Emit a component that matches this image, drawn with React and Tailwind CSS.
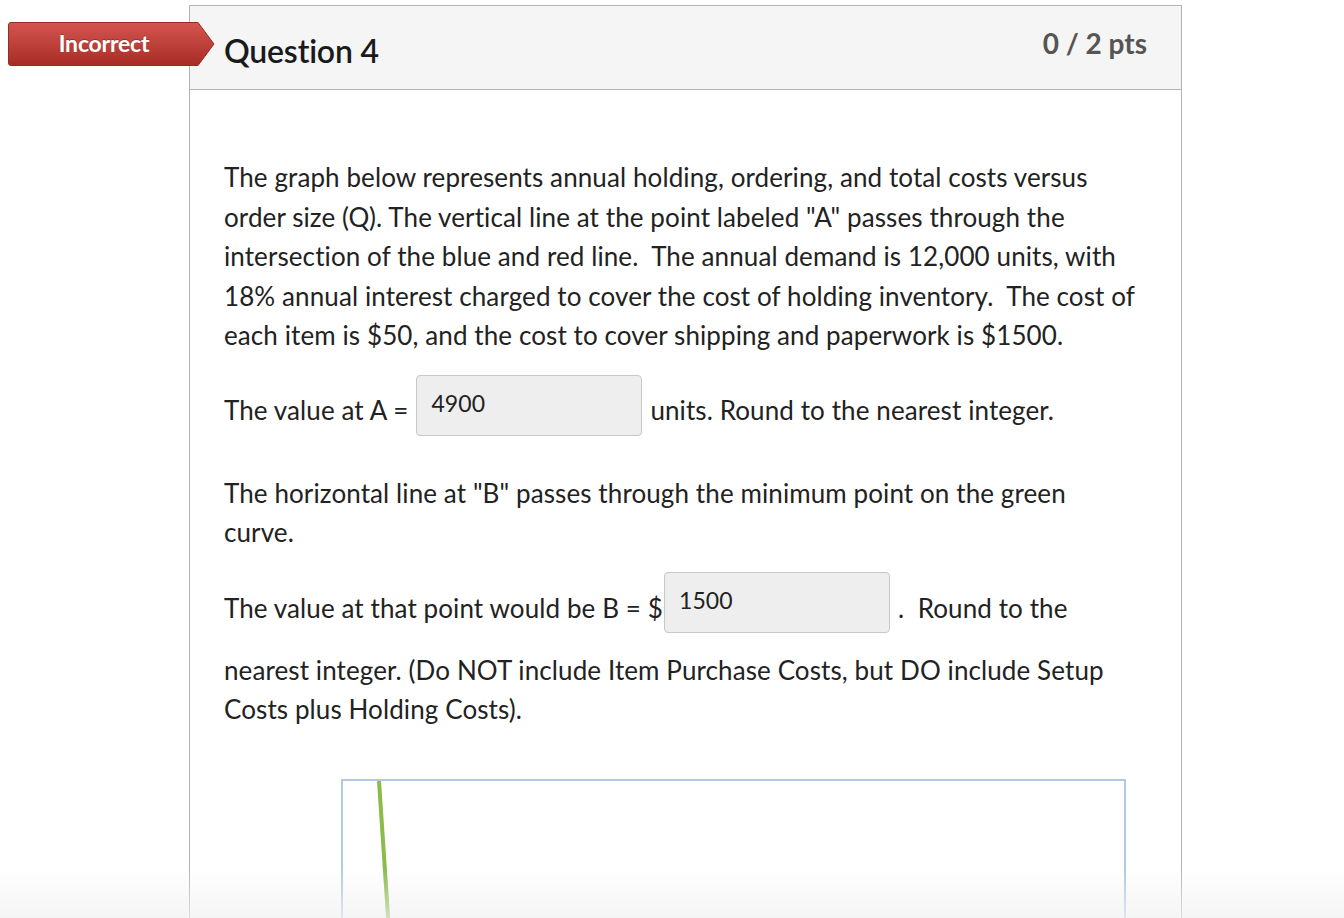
import React from "react";

function Badge() {
  return (
    <div className="relative w-[208px] h-[44px]">
      <svg width="208" height="44" viewBox="0 0 208 44" className="absolute inset-0">
        <defs>
          <linearGradient id="rg" x1="0" y1="0" x2="0" y2="1">
            <stop offset="0" stopColor="#d4554f" />
            <stop offset="1" stopColor="#a82c25" />
          </linearGradient>
        </defs>
        <path d="M3 0.5 H190 L206 22 L190 43.5 H3 Q0.5 43.5 0.5 41 V3 Q0.5 0.5 3 0.5 Z" fill="url(#rg)" stroke="#9a2a24" strokeWidth="1" />
      </svg>
      <div className="absolute left-0 top-0 w-[192px] h-[44px] flex items-center justify-center text-white font-bold text-[23px] tracking-[-0.2px] pb-[2px]" style={{ textShadow: "0 -1px 0 rgba(0,0,0,0.25)" }}>
        Incorrect
      </div>
    </div>
  );
}

function Field({ value }) {
  return (
    <div className="w-[226px] h-[61px] bg-[#eeeeee] border border-[#c8c8c8] rounded-[4px] flex items-center pl-[14px] pb-[2px] text-[23px] text-[#222] shrink-0">
      {value}
    </div>
  );
}

export default function App() {
  return (
    <div className="relative w-[1344px] h-[918px] overflow-hidden bg-white text-[#222]" style={{ fontFamily: "Lato, 'Open Sans', sans-serif" }}>
      <div className="flex pt-[5px]">
        <div className="w-[189px] shrink-0 pt-[17px] pl-[8px]">
          <Badge />
        </div>
        <div className="w-[993px] shrink-0 border border-[#b3b3b3] border-b-0 h-[950px]">
          <div className="h-[84px] bg-[#f5f5f5] border-b border-[#b3b3b3] flex justify-between pl-[34px] pr-[34px]">
            <div className="pt-[25px] text-[32px] font-semibold text-[#1a1a1a] leading-[40px] tracking-[-0.2px]">Question 4</div>
            <div className="pt-[19px] text-[28px] font-bold text-[#555] leading-[36px]">0 / 2 pts</div>
          </div>
          <div className="pl-[34px] pr-[20px] pt-[68px] text-[26px] leading-[39.5px] whitespace-nowrap tracking-[0.1px]">
            <p>
              The graph below represents annual holding, ordering, and total costs versus<br />
              order size (Q). The vertical line at the point labeled "A" passes through the<br />
              intersection of the blue and red line.&nbsp; The annual demand is 12,000 units, with<br />
              18% annual interest charged to cover the cost of holding inventory.&nbsp; The cost of<br />
              each item is $50, and the cost to cover shipping and paperwork is $1500.
            </p>
            <div className="flex items-center mt-[19px] h-[61px]">
              <span className="pt-[12px] mr-[8px]">The value at A =</span>
              <Field value="4900" />
              <span className="pt-[12px] ml-[8px]">units. Round to the nearest integer.</span>
            </div>
            <p className="mt-[38px]">
              The horizontal line at "B" passes through the minimum point on the green<br />
              curve.
            </p>
            <div className="flex items-center mt-[19px] h-[61px]">
              <span className="pt-[13px] mr-[1px]">The value at that point would be B = $</span>
              <Field value="1500" />
              <span className="pt-[13px] ml-[8px]">.&nbsp; Round to the</span>
            </div>
            <p className="mt-[18px]">
              nearest integer. (Do NOT include Item Purchase Costs, but DO include Setup<br />
              Costs plus Holding Costs).
            </p>
            <div className="mt-[49px] ml-[117px] w-[785px] h-[200px] border-2 border-[#b4c8e6] relative">
              <svg className="absolute inset-0" width="781" height="196">
                <path d="M36 0 L46 150" stroke="#8bbb4a" strokeWidth="4" fill="none" />
              </svg>
            </div>
          </div>
        </div>
      </div>
      <div className="absolute left-0 right-0 bottom-0 h-[50px] bg-gradient-to-b from-[rgba(245,245,245,0)] to-[rgba(240,240,240,0.7)] pointer-events-none" />
    </div>
  );
}
